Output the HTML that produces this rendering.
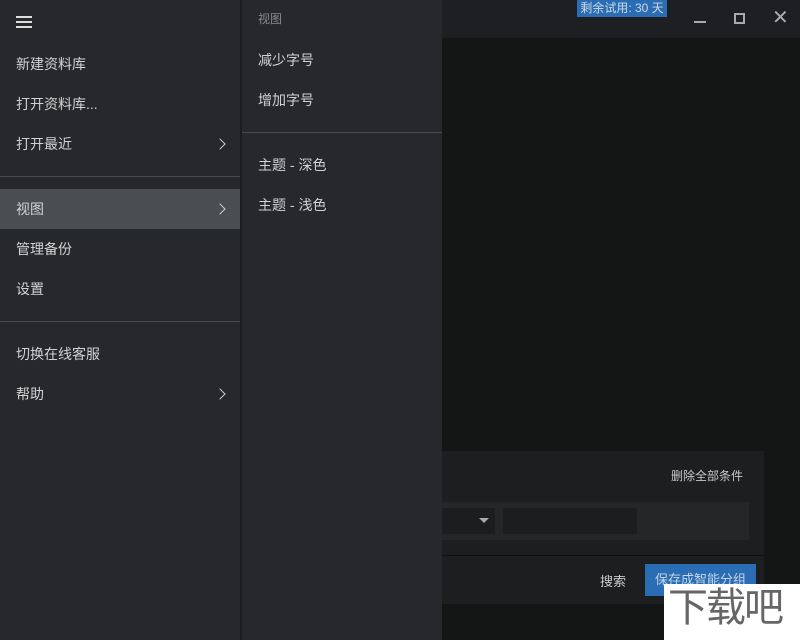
<!DOCTYPE html>
<html><head><meta charset="utf-8"><style>
*{margin:0;padding:0;box-sizing:border-box}
body{width:800px;height:640px;overflow:hidden;background:#141515;position:relative;font-family:"Liberation Sans","Noto Sans CJK SC",sans-serif;font-size:14px;color:#d2d2d2}
.abs{position:absolute}
.item{position:absolute;left:0;width:240px;height:40px;line-height:40px;padding-left:16px}
.sub{position:absolute;left:242px;width:200px;height:40px;line-height:40px;padding-left:16px}
.chev{position:absolute;right:16px;top:16px;width:8px;height:8px;border-right:1.8px solid #ccc;border-top:1.8px solid #ccc;transform:rotate(45deg)}
</style></head><body>
<div class="abs" style="left:442px;top:0;width:358px;height:38px;background:#1e1f22"></div>
<div class="abs" style="left:577px;top:0;width:90px;height:17px;background:#2a6db5;color:#cfd8e4;font-size:12px;line-height:17px;text-align:center">剩余试用: 30 天</div>
<div class="abs" style="left:694px;top:21px;width:12px;height:2px;background:#aaa"></div>
<div class="abs" style="left:734px;top:13px;width:11px;height:11px;border:2px solid #aaa"></div>
<div class="abs" style="left:772px;top:10px;font-size:20px;color:#aaa;line-height:16px">✕</div>

<div class="abs" style="left:442px;top:451px;width:322px;height:153px;background:#1d1e20"></div>
<div class="abs" style="left:671px;top:467px;font-size:12px;color:#c8c8c8">删除全部条件</div>
<div class="abs" style="left:442px;top:502px;width:307px;height:38px;background:#252628"></div>
<div class="abs" style="left:442px;top:508px;width:53px;height:26px;background:#1c1d1f"></div>
<div class="abs" style="left:479px;top:518px;width:0;height:0;border-left:5px solid transparent;border-right:5px solid transparent;border-top:5px solid #aaa"></div>
<div class="abs" style="left:503px;top:508px;width:134px;height:26px;background:#1c1d1f"></div>
<div class="abs" style="left:442px;top:555px;width:322px;height:1px;background:#111"></div>
<div class="abs" style="left:600px;top:571px;color:#ccc;font-size:13px">搜索</div>
<div class="abs" style="left:645px;top:564px;width:111px;height:32px;background:#2a6db5;color:#c5d4e6;line-height:32px;text-align:center;font-size:13px">保存成智能分组</div>
<div class="abs" style="left:664px;top:584px;width:136px;height:56px;background:#fff;color:#666;font-size:40px;line-height:48px;padding-left:4px;letter-spacing:-2px">下载吧</div>

<div class="abs" style="left:0;top:0;width:240px;height:640px;background:#27282b"></div>
<div class="abs" style="left:240px;top:0;width:2px;height:640px;background:#1c1d1f"></div>
<div class="abs" style="left:242px;top:0;width:200px;height:640px;background:#27282b"></div>
<div class="abs" style="left:16px;top:16px;width:16px;height:2px;background:#ddd;box-shadow:0 5px 0 #ddd,0 10px 0 #ddd"></div>
<div class="item" style="top:44px">新建资料库</div>
<div class="item" style="top:84px">打开资料库...</div>
<div class="item" style="top:124px">打开最近<span class="chev"></span></div>
<div class="abs" style="left:0;top:176px;width:240px;height:1px;background:#4a4b4d"></div>
<div class="item" style="top:189px;background:#4b4e50">视图<span class="chev"></span></div>
<div class="item" style="top:229px">管理备份</div>
<div class="item" style="top:269px">设置</div>
<div class="abs" style="left:0;top:321px;width:240px;height:1px;background:#4a4b4d"></div>
<div class="item" style="top:334px">切换在线客服</div>
<div class="item" style="top:374px">帮助<span class="chev"></span></div>

<div class="sub" style="top:0;height:38px;line-height:38px;font-size:12px;color:#8a8a8a">视图</div>
<div class="sub" style="top:40px">减少字号</div>
<div class="sub" style="top:80px">增加字号</div>
<div class="abs" style="left:242px;top:132px;width:200px;height:1px;background:#4a4b4d"></div>
<div class="sub" style="top:145px">主题 - 深色</div>
<div class="sub" style="top:185px">主题 - 浅色</div>
</body></html>
